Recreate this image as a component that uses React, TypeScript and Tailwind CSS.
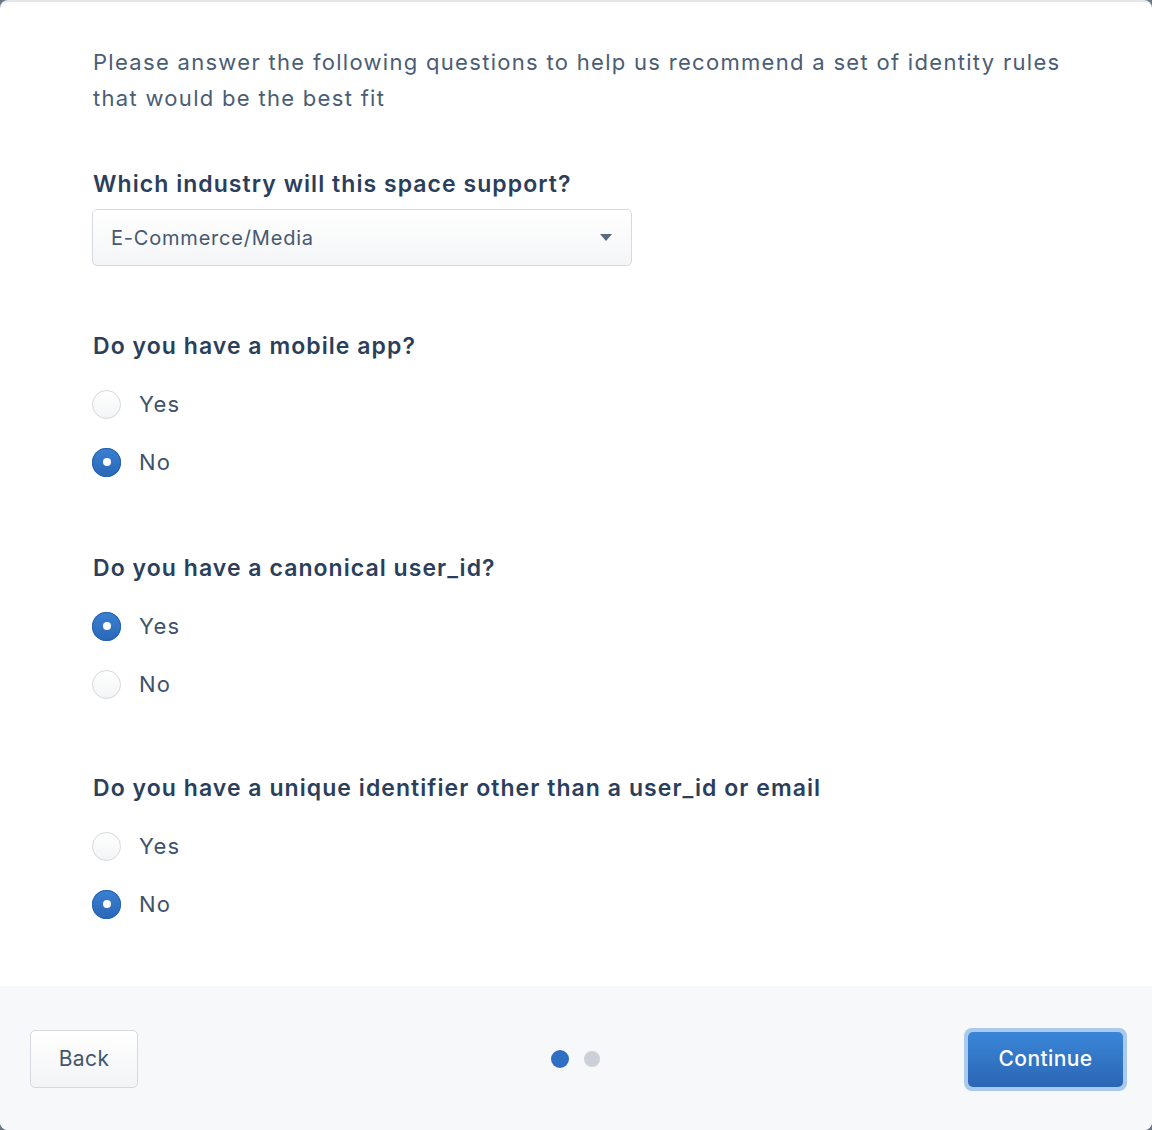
import { useState } from "react";

const QUESTIONS = [
  { id: "mobile", label: "Do you have a mobile app?", value: "no", gap: "mt-[65px]" },
  { id: "canonical", label: "Do you have a canonical user_id?", value: "yes", gap: "mt-[76px]" },
  { id: "unique", label: "Do you have a unique identifier other than a user_id or email", value: "no", gap: "mt-[74px]" },
];

function Radio({ checked, label, onClick }: { checked: boolean; label: string; onClick: () => void }) {
  return (
    <button type="button" onClick={onClick} className="flex items-center gap-[18px] h-[30px] text-left">
      {checked ? (
        <span className="flex items-center justify-center w-[29px] h-[29px] rounded-full bg-gradient-to-b from-[#3a80d2] to-[#2a67b7] shadow-[inset_0_0_0_1px_#2862b0]">
          <span className="w-[8px] h-[8px] rounded-full bg-white" />
        </span>
      ) : (
        <span className="w-[29px] h-[29px] rounded-full border border-[#d4d8de] bg-gradient-to-b from-white to-[#f3f4f6]" />
      )}
      <span className="text-[22px] tracking-[1.2px] text-[#3f526b]">{label}</span>
    </button>
  );
}

export default function App() {
  const [answers, setAnswers] = useState<Record<string, string>>(
    Object.fromEntries(QUESTIONS.map((q) => [q.id, q.value]))
  );

  return (
    <div className="w-[1152px] h-[1130px] bg-[#6b7684] overflow-hidden" style={{ fontFamily: "Inter, 'Noto Sans', sans-serif" }}>
      <div className="flex flex-col w-full h-full bg-white rounded-[8px] border-t-2 border-[#e4e6ea] overflow-hidden">
        {/* Body */}
        <div className="flex-1 pl-[93px] pr-[60px] pt-[42px]">
          <p className="text-[22px] leading-[36px] tracking-[1.3px] text-[#4a5d75] max-w-[990px]">
            Please answer the following questions to help us recommend a set of identity rules that would be the best fit
          </p>

          <h2 className="mt-[53px] text-[23px] font-semibold tracking-[1.05px] text-[#2b3f5c] leading-[30px]">
            Which industry will this space support?
          </h2>
          <div className="mt-[10px] -ml-px flex items-center justify-between w-[540px] h-[57px] pl-[18px] pr-[19px] rounded-[5px] border border-[#d6dae0] bg-gradient-to-b from-white to-[#f4f5f7]">
            <span className="text-[20px] tracking-[0.8px] text-[#46586f]">E-Commerce/Media</span>
            <svg width="12" height="7" viewBox="0 0 12 7">
              <path d="M0 0 H12 L6 7 Z" fill="#5a6a7e" />
            </svg>
          </div>

          {QUESTIONS.map((q) => (
            <div key={q.id} className={q.gap}>
              <h2 className="text-[23px] font-semibold tracking-[1.05px] text-[#2b3f5c] leading-[30px]">{q.label}</h2>
              <div className="mt-[28px] flex flex-col gap-[28px] -ml-px">
                <Radio checked={answers[q.id] === "yes"} label="Yes" onClick={() => setAnswers({ ...answers, [q.id]: "yes" })} />
                <Radio checked={answers[q.id] === "no"} label="No" onClick={() => setAnswers({ ...answers, [q.id]: "no" })} />
              </div>
            </div>
          ))}
        </div>

        {/* Footer */}
        <div className="h-[144px] shrink-0 bg-[#f7f8fa] flex items-center justify-between pl-[30px] pr-[25px] pt-[2px]">
          <button className="w-[108px] h-[58px] rounded-[5px] border border-[#d6dae0] bg-gradient-to-b from-white to-[#f3f4f6] text-[21px] tracking-[0.4px] text-[#44566e]">
            Back
          </button>
          <div className="flex items-center gap-[15px] ml-[48px]">
            <span className="w-[18px] h-[18px] rounded-full bg-[#2f6fc4]" />
            <span className="w-[16px] h-[16px] rounded-full bg-[#ccd1d8]" />
          </div>
          <button className="w-[163px] h-[63px] rounded-[8px] bg-[#a9c9ed] p-[4px]">
            <span className="flex items-center justify-center w-full h-full rounded-[5px] bg-gradient-to-b from-[#3a86d8] to-[#2b66b4] text-[21px] font-medium text-white tracking-[0.4px]">
              Continue
            </span>
          </button>
        </div>
      </div>
    </div>
  );
}
